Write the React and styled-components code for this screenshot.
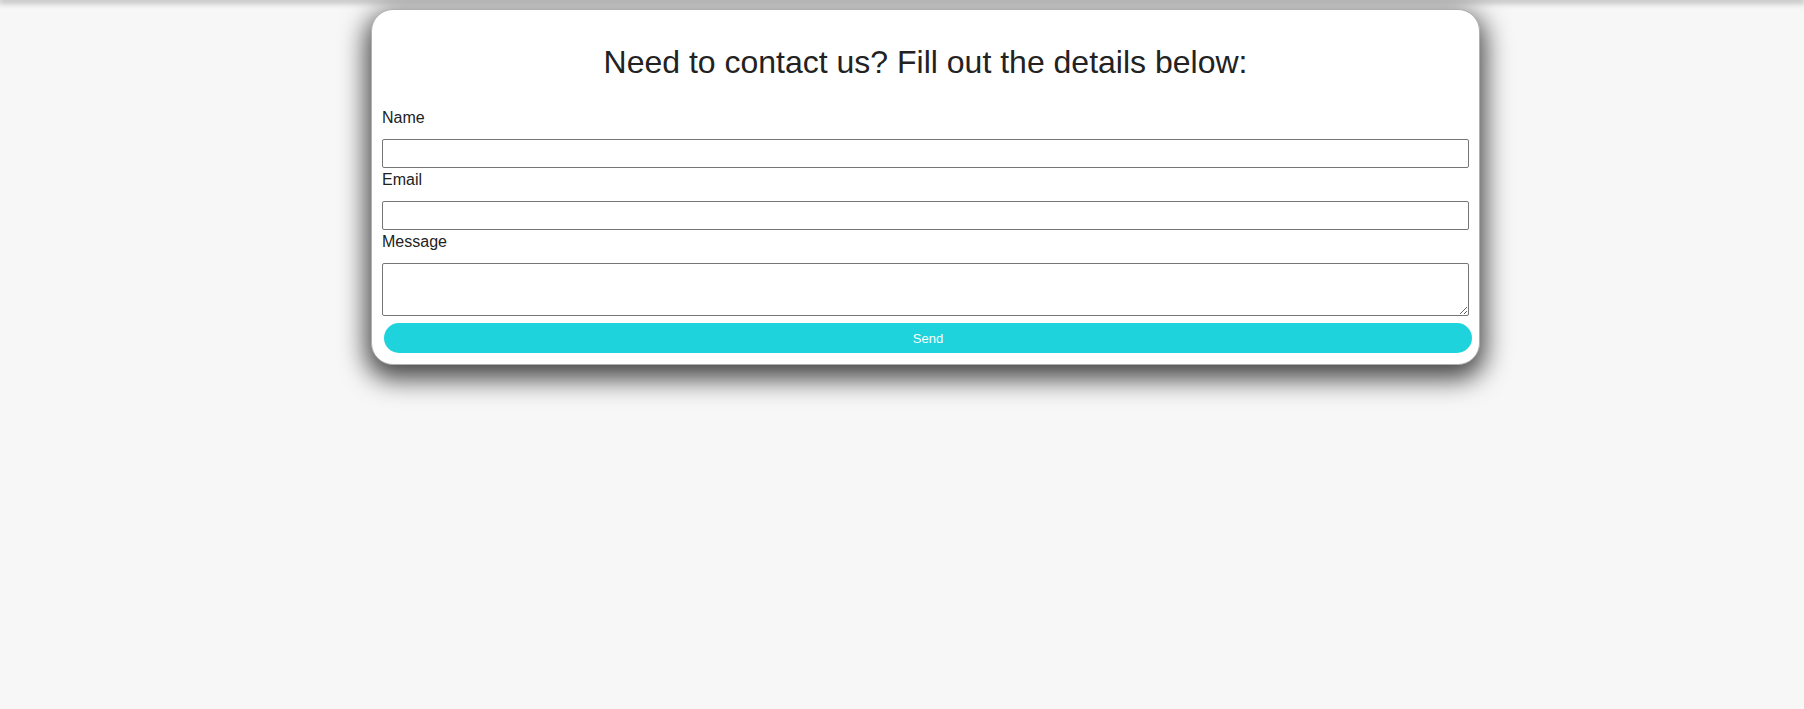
import React from 'react';
import styled, { createGlobalStyle } from 'styled-components';

const GlobalStyle = createGlobalStyle`
  html, body {
    margin: 0;
    padding: 0;
    background: #f7f7f7;
    font-family: 'Liberation Sans', Arial, sans-serif;
    color: #222;
  }
`;

const TopBar = styled.div`
  height: 0;
  box-shadow: 0 0 7px 2px rgba(0, 0, 0, 0.4);
`;

const Page = styled.div`
  min-height: 709px;
  padding-top: 9px;
  box-sizing: border-box;
`;

const Card = styled.form`
  box-sizing: border-box;
  width: 1109px;
  margin: 0 324px 0 371px;
  padding: 13px 10px 11px;
  background: #fff;
  border: 1px solid #b0b0b0;
  border-radius: 22px;
  box-shadow: 0 9px 26px 5px rgba(0, 0, 0, 0.72);
`;

const Title = styled.h1`
  margin: 21px 0 28px;
  text-align: center;
  font-size: 32px;
  font-weight: 400;
  line-height: 37px;
  color: #222;
`;

const Label = styled.label`
  display: block;
  font-size: 16px;
  line-height: 18px;
  margin: 3px 0 12px;
  color: #222;
`;

const Input = styled.input`
  display: block;
  box-sizing: border-box;
  width: 100%;
  height: 29px;
  margin: 0;
  padding: 2px 4px;
  border: 1px solid #767676;
  border-radius: 2px;
  background: #fff;
  font-family: 'Liberation Sans', Arial, sans-serif;
  font-size: 14px;
`;

const TextArea = styled.textarea`
  display: block;
  box-sizing: border-box;
  width: 100%;
  height: 53px;
  margin: 0;
  padding: 2px 4px;
  border: 1px solid #767676;
  border-radius: 2px;
  background: #fff;
  font-family: 'Liberation Sans', Arial, sans-serif;
  font-size: 14px;
`;

const SendButton = styled.button`
  display: block;
  box-sizing: border-box;
  width: calc(100% + 1px);
  margin: 7px 0 0 2px;
  height: 30px;
  border: none;
  border-radius: 15px;
  background: #1ed3db;
  color: #fff;
  font-family: 'Liberation Sans', Arial, sans-serif;
  font-size: 13px;
  font-weight: 400;
  cursor: pointer;
`;

export default function App() {
  return (
    <>
      <GlobalStyle />
      <TopBar />
      <Page>
        <Card onSubmit={(e) => e.preventDefault()}>
          <Title>Need to contact us? Fill out the details below:</Title>
          <Label htmlFor="name">Name</Label>
          <Input id="name" type="text" />
          <Label htmlFor="email">Email</Label>
          <Input id="email" type="email" />
          <Label htmlFor="message">Message</Label>
          <TextArea id="message" />
          <SendButton type="submit">Send</SendButton>
        </Card>
      </Page>
    </>
  );
}
